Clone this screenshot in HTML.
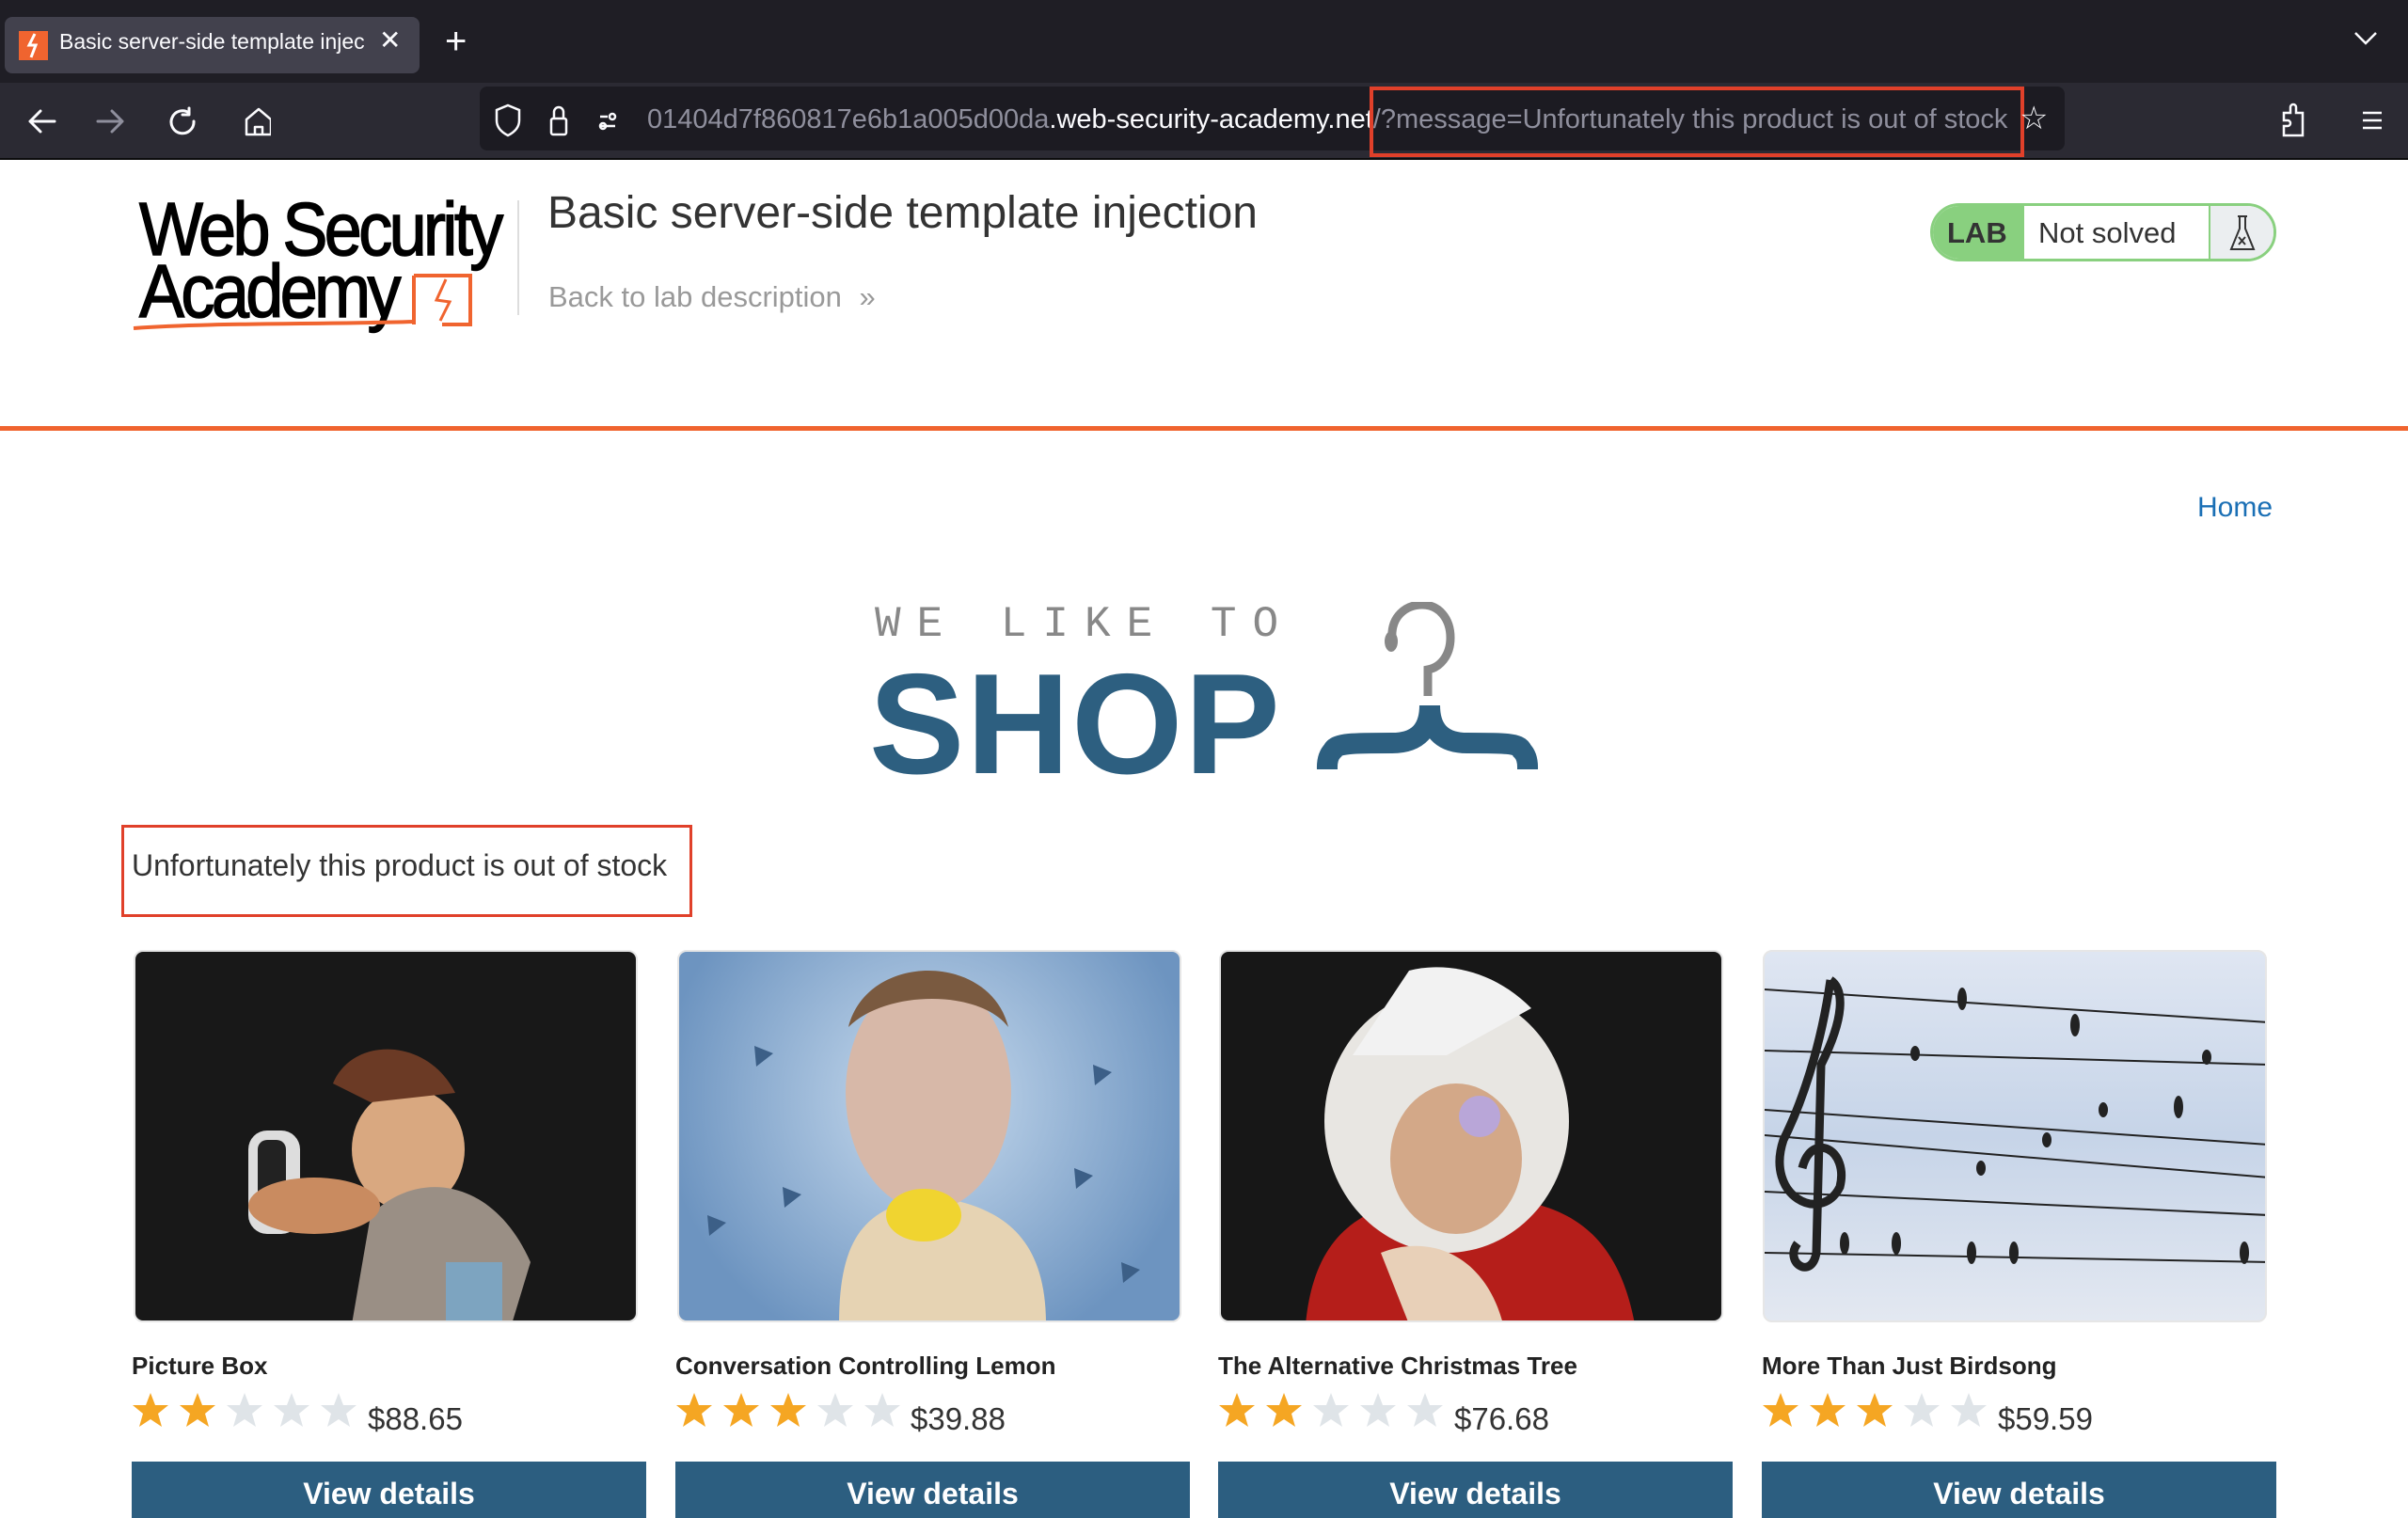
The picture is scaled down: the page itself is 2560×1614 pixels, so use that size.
<!DOCTYPE html>
<html><head><meta charset="utf-8">
<style>
*{margin:0;padding:0;box-sizing:border-box}
body{width:2560px;height:1600px;overflow:hidden;background:#fff;font-family:"Liberation Sans",sans-serif;position:relative}
.a{position:absolute}
.img{position:absolute;top:1010px;width:536px;height:396px;border-radius:10px;overflow:hidden;border:2px solid #e6e6e6}
.name{position:absolute;top:1437px;font-size:26px;font-weight:bold;color:#222}
.price{position:absolute;top:1490px;font-size:33px;color:#333}
.btn{position:absolute;top:1554px;width:547px;height:60px;background:#2c5e80;color:#fff;font-weight:bold;font-size:32px;text-align:center;padding-top:16px}
.stars{position:absolute;top:1480px}
.logo{position:absolute;left:148px;font-size:80px;color:#000;letter-spacing:-4px;transform:scaleX(0.9);transform-origin:left;white-space:nowrap;-webkit-text-stroke:1.5px #000}
</style></head><body>
<!-- tab bar -->
<div class="a" style="left:0;top:0;width:2560px;height:88px;background:#1f1e25"></div>
<div class="a" style="left:5px;top:18px;width:441px;height:60px;background:#42414d;border-radius:8px"></div>
<div class="a" style="left:20px;top:33px;width:31px;height:31px;background:#f0642f"></div>
<svg class="a" style="left:20px;top:33px" width="31" height="31"><path d="M17 3 L11 15 L18 15 L13 28" stroke="#fff" stroke-width="3" fill="none"/></svg>
<div class="a" style="left:63px;top:31px;font-size:23px;color:#fbfbfe;width:330px;white-space:nowrap;overflow:hidden">Basic server-side template injec</div>
<div class="a" style="left:403px;top:26px;font-size:28px;color:#fbfbfe">✕</div>
<div class="a" style="left:473px;top:22px;font-size:40px;color:#fbfbfe;font-weight:300">+</div>
<svg class="a" style="left:2500px;top:30px" width="30" height="20"><path d="M4 5 L15 16 L26 5" stroke="#fbfbfe" stroke-width="2.5" fill="none"/></svg>
<!-- toolbar -->
<div class="a" style="left:0;top:88px;width:2560px;height:82px;background:#2b2a33"></div>
<div class="a" style="left:0;top:168px;width:2560px;height:2px;background:#0c0c0d"></div>
<svg class="a" style="left:28px;top:112px" width="260" height="34" fill="none" stroke-width="3" stroke-linecap="round" stroke-linejoin="round">
<path d="M4 17 H30 M4 17 L15 6 M4 17 L15 28" stroke="#fbfbfe"/>
<path d="M76 17 H102 M102 17 L91 6 M102 17 L91 28" stroke="#8f8f9d"/>
<path d="M173 8 A12 12 0 1 0 178 17 M173 3 V10 H166" stroke="#fbfbfe"/>
<path d="M234 15 L247 4 L260 15 V31 H234 Z M243 31 V23 H251 V31" stroke="#fbfbfe" stroke-width="2.5"/>
</svg>
<div class="a" style="left:510px;top:92px;width:1685px;height:68px;background:#1c1b22;border-radius:8px"></div>
<svg class="a" style="left:520px;top:108px" width="160" height="40" fill="none" stroke="#fbfbfe" stroke-width="2.5">
<path d="M20 4 L32 9 V20 C32 28 26 33 20 36 C14 33 8 28 8 20 V9 Z"/>
<rect x="66" y="18" width="16" height="17" rx="2"/><path d="M69 18 V11 A5 5 0 0 1 79 11 V18"/>
<path d="M118 16 H126 M118 26 H134" /><circle cx="131" cy="16" r="3"/><circle cx="121" cy="26" r="3"/>
</svg>
<div class="a" style="left:688px;top:111px;font-size:29px;color:#8f8f9d;white-space:nowrap">01404d7f860817e6b1a005d00da<span style="color:#fbfbfe">.web-security-academy.net</span>/?message=Unfortunately this product is out of stock</div>
<div class="a" style="left:1456px;top:92px;width:696px;height:75px;border:4px solid #e0402a"></div>
<div class="a" style="left:2147px;top:106px;font-size:34px;color:#fbfbfe">☆</div>
<svg class="a" style="left:2420px;top:108px" width="120" height="40" fill="none" stroke="#fbfbfe" stroke-width="2.5">
<path d="M8 36 V26 H12 A3 3 0 0 0 12 20 H8 V12 H15 V6 A3 3 0 0 1 21 6 V12 H28 V36 Z"/>
<path d="M92 12 H112 M92 20 H112 M92 28 H112"/>
</svg>
<!-- header -->
<div class="logo" style="top:198px">Web Security</div>
<div class="logo" style="top:264px">Academy</div>
<svg class="a" style="left:140px;top:285px" width="370" height="70" fill="none" stroke="#f0642f" stroke-width="4">
<path d="M300 8 H360 V60 H330 M300 8 V60"/>
<path d="M334 12 L324 34 L338 36 L328 56" stroke-width="3"/>
<path d="M2 64 C80 58 200 60 300 57" stroke-width="4"/>
</svg>
<div class="a" style="left:550px;top:213px;width:2px;height:122px;background:#ddd"></div>
<div class="a" style="left:582px;top:199px;font-size:48px;color:#333">Basic server-side template injection</div>
<div class="a" style="left:583px;top:298px;font-size:31px;color:#999">Back to lab description <span style="margin-left:10px">»</span></div>
<div class="a" style="left:2052px;top:216px;width:368px;height:62px;border:3px solid #89d07f;border-radius:31px;overflow:hidden;background:#fff">
<div class="a" style="left:0;top:0;width:97px;height:56px;background:#89d07f;color:#333;font-weight:bold;font-size:31px;padding:11px 0 0 15px">LAB</div>
<div class="a" style="left:112px;top:11px;font-size:31px;color:#333">Not solved</div>
<div class="a" style="left:293px;top:0;width:2px;height:56px;background:#89d07f"></div>
<div class="a" style="left:295px;top:0;width:70px;height:56px;background:#ebeef0"></div>
<svg class="a" style="left:310px;top:8px" width="40" height="42" fill="none" stroke="#333" stroke-width="2"><path d="M14 3 H24 M16 3 V16 L7 38 H31 L22 16 V3"/><path d="M15 25 L22 33 M22 25 L15 33"/></svg>
</div>
<div class="a" style="left:0;top:453px;width:2560px;height:5px;background:#f0642f"></div>
<!-- home -->
<div class="a" style="left:2336px;top:523px;font-size:30px;color:#1a6fb5">Home</div>
<!-- logo -->
<div class="a" style="left:930px;top:638px;font-family:'Liberation Mono',monospace;font-size:46px;color:#888;letter-spacing:17px;white-space:nowrap">WE LIKE TO</div>
<div class="a" style="left:924px;top:683px;font-size:152px;font-weight:bold;color:#2d5f80;letter-spacing:2px;white-space:nowrap">SHOP</div>
<svg class="a" style="left:1390px;top:640px" width="250" height="185" fill="none">
<path d="M90 40 C88 15 105 3 122 3 C140 3 152 18 152 38 C152 58 140 70 128 72 V100" stroke="#888" stroke-width="9"/>
<ellipse cx="89" cy="42" rx="7" ry="11" fill="#888"/>
<path d="M130 110 C130 135 118 150 90 150 C50 150 30 150 27 158 C20 165 21 175 21 178 M130 110 C130 135 142 150 170 150 C210 150 225 150 228 158 C235 165 234 175 234 178" stroke="#2d5f80" stroke-width="22"/>
</svg>
<!-- message -->
<div class="a" style="left:129px;top:877px;width:607px;height:98px;border:3px solid #e0402a"></div>
<div class="a" style="left:140px;top:902px;font-size:32px;color:#333">Unfortunately this product is out of stock</div>
<!-- images -->
<div class="img" style="left:142px;background:#181818">
<svg width="536" height="396"><ellipse cx="290" cy="210" rx="60" ry="65" fill="#d9a880"/><path d="M210 140 C230 90 310 90 340 150 L250 160 Z" fill="#6b3a25"/><path d="M250 280 C300 230 380 240 420 330 L400 396 L230 396 Z" fill="#9a8f85"/><rect x="120" y="190" width="55" height="110" rx="20" fill="#ddd"/><rect x="130" y="200" width="30" height="85" rx="10" fill="#222"/><ellipse cx="190" cy="270" rx="70" ry="30" fill="#c98b60"/><rect x="330" y="330" width="60" height="66" fill="#7da4c0"/></svg>
</div>
<div class="img" style="left:720px;background:radial-gradient(circle at 50% 40%,#c9dcef,#6d94c0 80%)">
<svg width="536" height="396"><path d="M170 396 C170 300 200 270 270 260 C340 270 390 300 390 396 Z" fill="#e6d3b3"/><ellipse cx="265" cy="150" rx="88" ry="125" fill="#d7b8a8"/><path d="M180 80 C200 0 330 0 350 80 C320 40 220 40 180 80 Z" fill="#7a5a40"/><ellipse cx="260" cy="280" rx="40" ry="28" fill="#f0d430"/><g fill="#3c5f87"><path d="M80 100 l20 8 -18 14z"/><path d="M110 250 l20 8 -18 14z"/><path d="M440 120 l20 8 -18 14z"/><path d="M470 330 l20 8 -18 14z"/><path d="M30 280 l20 8 -18 14z"/><path d="M420 230 l20 8 -18 14z"/></g></svg>
</div>
<div class="img" style="left:1296px;background:#171717">
<svg width="536" height="396"><path d="M90 396 C100 290 160 260 260 260 C360 260 420 290 440 396 Z" fill="#b51e1a"/><ellipse cx="240" cy="180" rx="130" ry="140" fill="#e8e6e2"/><ellipse cx="250" cy="220" rx="70" ry="80" fill="#d3a888"/><circle cx="275" cy="175" r="22" fill="#b9a6d8"/><path d="M170 320 C220 300 280 320 300 396 L200 396 Z" fill="#e8d0b8"/><path d="M200 20 C240 10 290 20 330 60 L240 110 L140 110 Z" fill="#f2f2f2"/></svg>
</div>
<div class="img" style="left:1874px;background:linear-gradient(180deg,#dfe6f2,#c6d4e8 50%,#e3e8f1)">
<svg width="536" height="396" fill="none" stroke="#222" stroke-width="2"><path d="M0 40 L536 75 M0 105 L536 120 M0 168 L536 205 M0 195 L536 240 M0 255 L536 280 M0 320 L536 330"/><path d="M70 30 C60 100 40 160 20 200 C0 260 60 290 80 250 C90 210 50 190 40 230 M70 30 C85 40 85 70 60 120 L55 320 C50 350 20 330 35 310" stroke-width="9"/><g fill="#222" stroke="none"><ellipse cx="210" cy="50" rx="5" ry="12"/><ellipse cx="330" cy="78" rx="5" ry="12"/><ellipse cx="440" cy="165" rx="5" ry="12"/><ellipse cx="160" cy="108" rx="5" ry="8"/><ellipse cx="360" cy="168" rx="5" ry="8"/><ellipse cx="470" cy="112" rx="5" ry="8"/><ellipse cx="85" cy="310" rx="5" ry="12"/><ellipse cx="140" cy="310" rx="5" ry="12"/><ellipse cx="220" cy="320" rx="5" ry="12"/><ellipse cx="265" cy="320" rx="5" ry="12"/><ellipse cx="300" cy="200" rx="5" ry="8"/><ellipse cx="230" cy="230" rx="5" ry="8"/><ellipse cx="510" cy="320" rx="5" ry="12"/></g></svg>
</div>
<!-- names -->
<div class="name" style="left:140px">Picture Box</div>
<div class="name" style="left:718px">Conversation Controlling Lemon</div>
<div class="name" style="left:1295px">The Alternative Christmas Tree</div>
<div class="name" style="left:1873px">More Than Just Birdsong</div>
<svg width="0" height="0" style="position:absolute"><defs><path id="st" d="M20 1 L25 14 L39 14 L28 23 L32 37 L20 29 L8 37 L12 23 L1 14 L15 14 Z"/></defs></svg>
<svg class="stars" style="left:140px" width="250" height="40"><use href="#st" fill="#f5a623"/><use href="#st" x="50" fill="#f5a623"/><use href="#st" x="100" fill="#dfe4e8"/><use href="#st" x="150" fill="#dfe4e8"/><use href="#st" x="200" fill="#dfe4e8"/></svg>
<svg class="stars" style="left:718px" width="250" height="40"><use href="#st" fill="#f5a623"/><use href="#st" x="50" fill="#f5a623"/><use href="#st" x="100" fill="#f5a623"/><use href="#st" x="150" fill="#dfe4e8"/><use href="#st" x="200" fill="#dfe4e8"/></svg>
<svg class="stars" style="left:1295px" width="250" height="40"><use href="#st" fill="#f5a623"/><use href="#st" x="50" fill="#f5a623"/><use href="#st" x="100" fill="#dfe4e8"/><use href="#st" x="150" fill="#dfe4e8"/><use href="#st" x="200" fill="#dfe4e8"/></svg>
<svg class="stars" style="left:1873px" width="250" height="40"><use href="#st" fill="#f5a623"/><use href="#st" x="50" fill="#f5a623"/><use href="#st" x="100" fill="#f5a623"/><use href="#st" x="150" fill="#dfe4e8"/><use href="#st" x="200" fill="#dfe4e8"/></svg>
<div class="price" style="left:391px">$88.65</div>
<div class="price" style="left:968px">$39.88</div>
<div class="price" style="left:1546px">$76.68</div>
<div class="price" style="left:2124px">$59.59</div>
<div class="btn" style="left:140px">View details</div>
<div class="btn" style="left:718px">View details</div>
<div class="btn" style="left:1295px">View details</div>
<div class="btn" style="left:1873px">View details</div>
</body></html>
